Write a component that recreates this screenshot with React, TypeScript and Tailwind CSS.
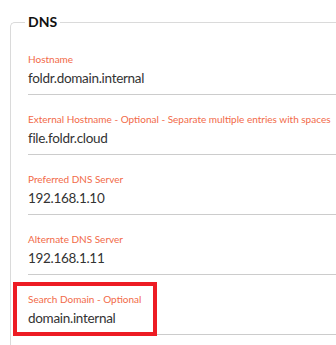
import React from "react";

const fields = [
  { label: "Hostname", value: "foldr.domain.internal" },
  { label: "External Hostname - Optional - Separate multiple entries with spaces", value: "file.foldr.cloud" },
  { label: "Preferred DNS Server", value: "192.168.1.10" },
  { label: "Alternate DNS Server", value: "192.168.1.11" },
  { label: "Search Domain - Optional", value: "domain.internal" },
];

export default function App() {
  return (
    <div
      className="relative w-[336px] h-[345px] overflow-hidden bg-white"
      style={{ fontFamily: 'Lato, "Open Sans", sans-serif' }}
    >
      <fieldset className="ml-[10px] mt-[12px] w-[380px] border-l border-t border-[#dadada] rounded-tl-[5px] pl-[17px] pt-[20px] pb-[40px]">
        <legend className="-ml-[3px] px-[3px] text-[14px] leading-[20px] font-bold text-[#111]">DNS</legend>
        <div className="flex flex-col gap-[17px]">
          {fields.map((f) => (
            <div key={f.label} className="flex flex-col border-b border-[#cccccc] pb-[6px]">
              <span className="text-[10px] leading-[14px] text-[#f26a48] whitespace-nowrap">{f.label}</span>
              <span className="mt-[2px] text-[13.5px] leading-[20px] tracking-[-0.3px] text-[#333333]">{f.value}</span>
            </div>
          ))}
        </div>
      </fieldset>
      <div className="absolute left-[13px] top-[282px] w-[144px] h-[54px] border-4 border-[#ed1c24]" />
    </div>
  );
}
